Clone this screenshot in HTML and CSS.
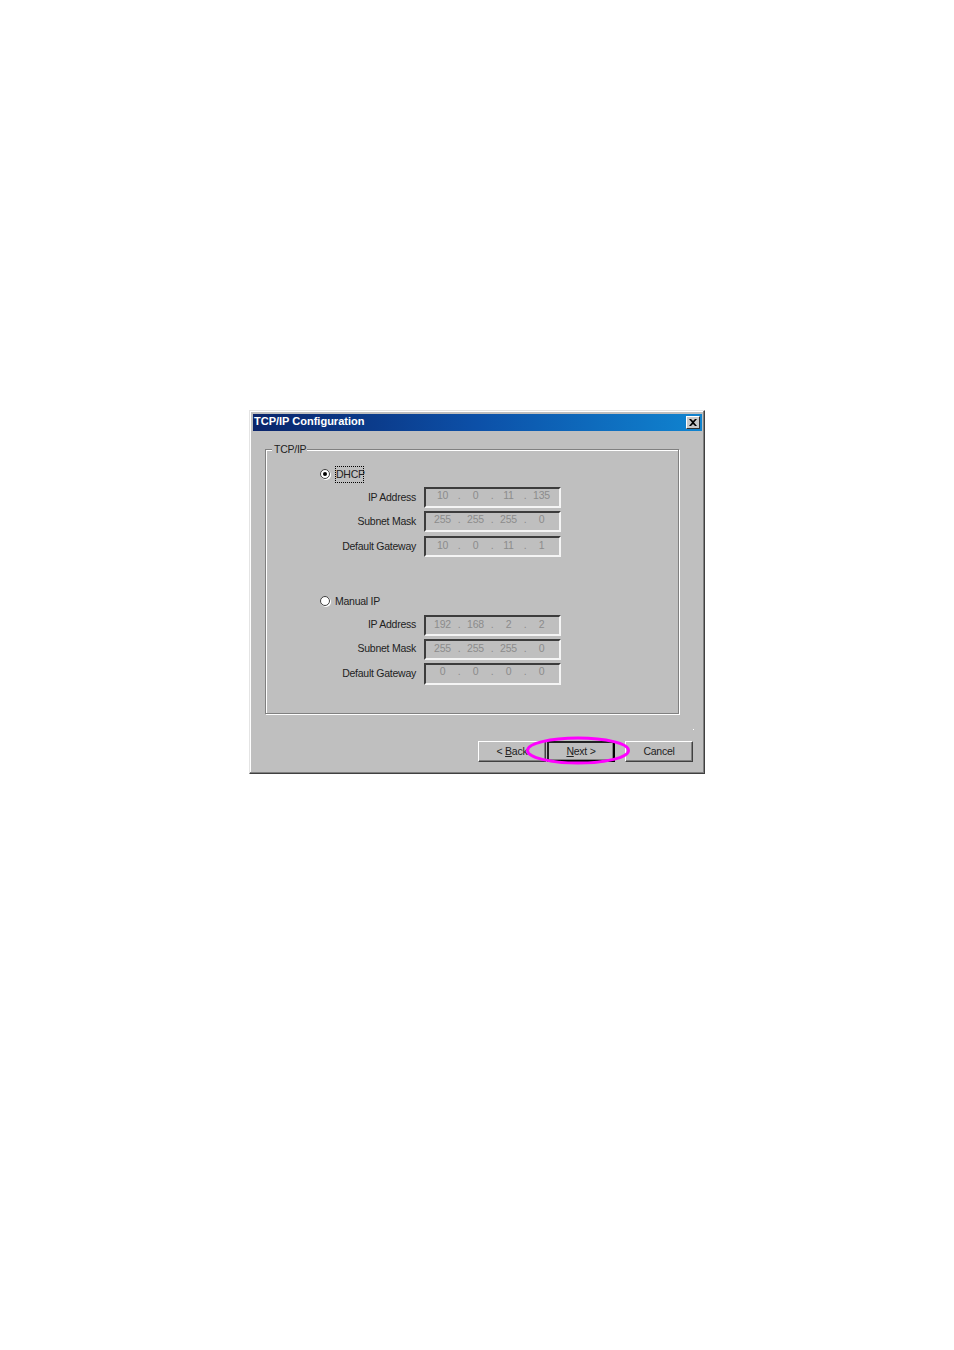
FILE: index.html
```html
<!DOCTYPE html>
<html lang="en">

<head>
    <meta charset="UTF-8">
    <title>TCP/IP Configuration</title>
    <link rel="stylesheet" href="styles.css">
</head>

<body>
    <div class="dialog">
        <div class="titlebar">
            <span class="title">TCP/IP Configuration</span>
            <div class="close">
                <svg width="8" height="7" viewBox="0 0 8 7">
                    <path d="M0 0h2l2 2 2-2h2L5 3.500 8 7H6L4 5 2 7H0l3-3.500z" fill="#000" />
                </svg>
            </div>
        </div>
        <fieldset class="group">
            <legend>TCP/IP</legend>
            <div class="option">
                <span class="radio checked"></span>
                <span class="focus">DHCP</span>
            </div>
            <div class="row">
                <span class="label">IP Address</span>
                <div class="field up"><span>10</span><i>.</i><span>0</span><i>.</i><span>11</span><i>.</i><span>135</span></div>
            </div>
            <div class="row wide">
                <span class="label">Subnet Mask</span>
                <div class="field up"><span>255</span><i>.</i><span>255</span><i>.</i><span>255</span><i>.</i><span>0</span></div>
            </div>
            <div class="row">
                <span class="label">Default Gateway</span>
                <div class="field"><span>10</span><i>.</i><span>0</span><i>.</i><span>11</span><i>.</i><span>1</span></div>
            </div>
            <div class="option second">
                <span class="radio"></span>
                <span class="plain">Manual IP</span>
            </div>
            <div class="row lower">
                <span class="label">IP Address</span>
                <div class="field"><span>192</span><i>.</i><span>168</span><i>.</i><span>2</span><i>.</i><span>2</span></div>
            </div>
            <div class="row lower">
                <span class="label">Subnet Mask</span>
                <div class="field"><span>255</span><i>.</i><span>255</span><i>.</i><span>255</span><i>.</i><span>0</span></div>
            </div>
            <div class="row">
                <span class="label">Default Gateway</span>
                <div class="field tall"><span>0</span><i>.</i><span>0</span><i>.</i><span>0</span><i>.</i><span>0</span></div>
            </div>
        </fieldset>
        <span class="speck"></span>
        <div class="buttons">
            <div class="btn"><span>&lt; <u>B</u>ack</span></div>
            <div class="btn default"><span><u>N</u>ext &gt;</span></div>
            <div class="btn cancel"><span>Cancel</span></div>
            <svg class="ring" width="108" height="32" viewBox="0 0 108 32">
                <ellipse cx="54" cy="15.500" rx="50.500" ry="12.500" fill="none" stroke="#ff00ff" stroke-width="3" />
            </svg>
        </div>
    </div>
</body>

</html>
```

FILE: styles.css
```css
html {
  background-color: #fff;
}
body {
  margin: 0;
  padding: 410px 0 0 249px;
  font-family: "Liberation Sans", Arial, sans-serif;
  font-size: 10.5px;
  letter-spacing: -0.25px;
  color: #222;
}
.dialog {
  width: 456px;
  height: 364px;
  box-sizing: border-box;
  padding: 3px 2px 0 3px;
  background-color: #bfbfbf;
  border: 1px solid;
  border-color: #e4e4e4 #404040 #404040 #e4e4e4;
  box-shadow: inset -1px -1px 0 #808080, inset 1px 1px 0 #fff;
  position: relative;
}
.titlebar {
  height: 17px;
  box-sizing: border-box;
  display: flex;
  align-items: center;
  justify-content: space-between;
  padding: 0 2px 0 1px;
  background: linear-gradient(90deg, #0a246a 0%, #0c50a8 50%, #1084d0 100%);
}
.title {
  color: #fff;
  font-weight: 700;
  font-size: 11px;
  letter-spacing: 0;
  margin-top: -3px;
}
.close {
  width: 14px;
  height: 13px;
  box-sizing: border-box;
  display: flex;
  align-items: center;
  justify-content: center;
  background-color: #c8c8c8;
  border: 1px solid;
  border-color: #fff #303030 #303030 #fff;
}
.group {
  width: 414px;
  height: 271px;
  box-sizing: border-box;
  margin: 12px 0 0 12px;
  padding: 0;
  min-width: 0;
  border: 1px solid #808080;
  box-shadow: inset 1px 1px 0 #fff, 1px 1px 0 #fff;
}
.group legend {
  margin-left: 6px;
  padding: 0 1px 0 2px;
  line-height: 13px;
  background-color: #bfbfbf;
}
.option {
  display: flex;
  align-items: center;
  gap: 5px;
  height: 16px;
  margin: 10px 0 5px 54px;
}
.option.second {
  margin-top: 33px;
  margin-bottom: 6px;
}
.radio {
  width: 10px;
  height: 10px;
  box-sizing: border-box;
  border-radius: 50%;
  background-color: #fff;
  border: 1px solid #404040;
  box-shadow: 1px 1px 0 #fff;
  display: flex;
  align-items: center;
  justify-content: center;
}
.radio.checked::after {
  content: "";
  width: 4px;
  height: 4px;
  border-radius: 50%;
  background-color: #000;
}
.focus {
  padding: 1px 0;
  width: 29px;
  line-height: 13px;
  border: 1px dotted #000;
  box-sizing: border-box;
}
.row {
  display: flex;
  align-items: flex-start;
  height: 24px;
}
.row.wide {
  height: 25px;
}
.label {
  width: 150px;
  text-align: right;
  line-height: 21px;
  margin-right: 8px;
}
.row.lower .label {
  line-height: 19px;
}
.field {
  width: 137px;
  height: 21px;
  box-sizing: border-box;
  padding: 0 0 4px 5px;
  display: grid;
  grid-template-columns: 23px 10px 23px 10px 23px 10px 23px;
  align-items: center;
  text-align: center;
  color: #8c8c8c;
  border: 2px solid;
  border-color: #3c3c3c #f4f4f4 #f4f4f4 #3c3c3c;
}
.field.up {
  padding-bottom: 6px;
}
.field.tall {
  height: 22px;
  padding-bottom: 6px;
}
.field i {
  font-style: normal;
}
.speck {
  position: absolute;
  left: 443px;
  top: 318px;
  width: 1px;
  height: 1px;
  background-color: #fff;
}
.buttons {
  display: flex;
  margin: 27px 0 0 225px;
  position: relative;
}
.btn {
  width: 68px;
  height: 21px;
  box-sizing: border-box;
  padding-bottom: 1px;
  display: flex;
  align-items: center;
  justify-content: center;
  background-color: #bfbfbf;
  border: 1px solid;
  border-color: #fff #404040 #404040 #fff;
  box-shadow: inset -1px -1px 0 #808080;
}
.btn.default {
  margin-left: 1px;
  border: 2px solid #000;
  border-color: #222 #000 #000 #222;
}
.btn.cancel {
  margin-left: 10px;
}
.ring {
  position: absolute;
  left: 46px;
  top: -6px;
}
```
